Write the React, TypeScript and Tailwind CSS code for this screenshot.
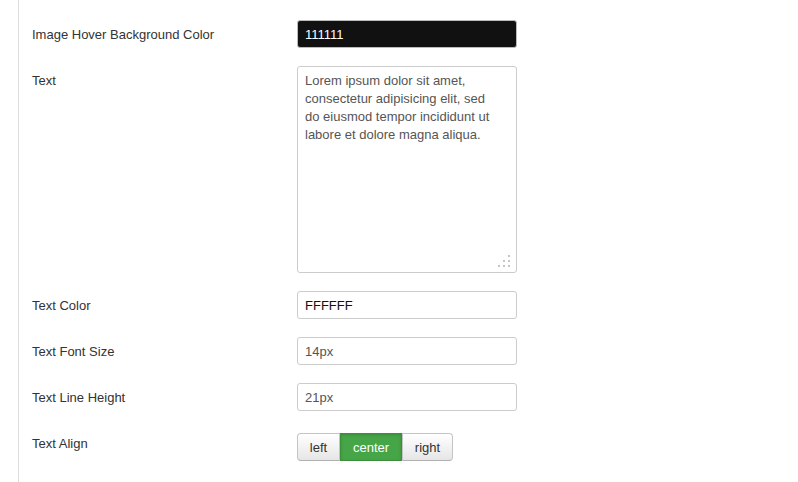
import React from "react";

const Label = ({ children }: { children: React.ReactNode }) => (
    <div className="w-[265px] shrink-0 pt-[6px] text-[13px] leading-[18px] text-[#333]">{children}</div>
);

const TextInput = ({ value, dark, strong }: { value: string; dark?: boolean; strong?: boolean }) => (
    <div
        className={
            "w-[220px] h-[28px] rounded-[3px] border px-[7px] pt-[1px] text-[13px] leading-[26px] overflow-hidden " +
            (dark
                ? "bg-[#111111] border-[#bbbbbb] text-white"
                : strong
                ? "bg-white border-[#cccccc] text-[#111111]"
                : "bg-white border-[#cccccc] text-[#555555]")
        }
    >
        {value}
    </div>
);

const Grip = () => (
    <svg className="absolute right-[5px] bottom-[5px]" width="13" height="12" viewBox="0 0 13 12">
        <rect x="10" y="0" width="2" height="2" fill="#c4c4c4" />
        <rect x="5" y="5" width="2" height="2" fill="#c4c4c4" />
        <rect x="10" y="5" width="2" height="2" fill="#c4c4c4" />
        <rect x="0" y="10" width="2" height="2" fill="#c4c4c4" />
        <rect x="5" y="10" width="2" height="2" fill="#c4c4c4" />
        <rect x="10" y="10" width="2" height="2" fill="#c4c4c4" />
    </svg>
);

export default function App() {
    const align = "center";
    const options = ["left", "center", "right"];

    return (
        <div className="w-[798px] h-[482px] bg-white font-['Liberation_Sans',Arial,sans-serif] overflow-hidden">
            <div className="ml-[18px] h-full border-l border-[#dddddd] pl-[13px] pt-[20px] flex flex-col gap-[18px]">
                <div className="flex">
                    <Label>Image Hover Background Color</Label>
                    <TextInput value="111111" dark />
                </div>
                <div className="flex">
                    <Label>Text</Label>
                    <div className="relative w-[220px] h-[207px] rounded-[3px] border border-[#cccccc] bg-white pl-[7px] pr-[20px] pt-[5px] text-[13px] leading-[18px] text-[#555555]">
                        Lorem ipsum dolor sit amet, consectetur adipisicing elit, sed do eiusmod tempor incididunt ut labore et dolore magna aliqua.
                        <Grip />
                    </div>
                </div>
                <div className="flex">
                    <Label>Text Color</Label>
                    <TextInput value="FFFFFF" strong />
                </div>
                <div className="flex">
                    <Label>Text Font Size</Label>
                    <TextInput value="14px" />
                </div>
                <div className="flex">
                    <Label>Text Line Height</Label>
                    <TextInput value="21px" />
                </div>
                <div className="flex">
                    <Label>Text Align</Label>
                    <div className="flex mt-[4px]">
                        {options.map((opt, i) => {
                            const active = opt === align;
                            return (
                                <div
                                    key={opt}
                                    className={
                                        "h-[28px] pt-[1px] text-[13px] leading-[26px] border text-center " +
                                        (i === 0 ? "w-[43px] rounded-l-[4px] " : "") +
                                        (i === 1 ? "w-[62px] " : "") +
                                        (i === 2 ? "w-[51px] rounded-r-[4px] " : "") +
                                        (active
                                            ? "bg-[#46a546] border-[#3c8f3c] text-white shadow-[inset_0_1px_3px_rgba(0,0,0,0.15)]"
                                            : "bg-gradient-to-b from-white to-[#e6e6e6] border-[#c4c4c4] border-b-[#b0b0b0] text-[#333]")
                                    }
                                >
                                    {opt}
                                </div>
                            );
                        })}
                    </div>
                </div>
            </div>
        </div>
    );
}
